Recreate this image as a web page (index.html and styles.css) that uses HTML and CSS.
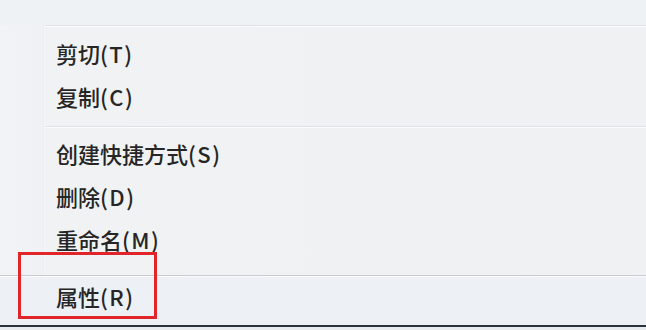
FILE: index.html
```html
<!DOCTYPE html>
<html lang="zh-CN">
<head>
<meta charset="utf-8">
<link rel="stylesheet" href="styles.css">
</head>
<body>
<div class="screen">
  <div class="menu">
    <div class="top"></div>
    <div class="sep"></div>
    <div class="group g1">
      <div class="item">剪切<span class="key">(T)</span></div>
      <div class="item">复制<span class="key">(C)</span></div>
    </div>
    <div class="sep"></div>
    <div class="group g2">
      <div class="item">创建快捷方式<span class="key">(S)</span></div>
      <div class="item">删除<span class="key">(D)</span></div>
      <div class="item">重命名<span class="key">(M)</span></div>
    </div>
    <div class="sep full"></div>
    <div class="group g3">
      <div class="item">属性<span class="key">(R)</span></div>
    </div>
    <div class="bottom"></div>
  </div>
  <div class="highlight"></div>
</div>
</body>
</html>
```
FILE: styles.css
```css
html, body {
  margin: 0;
  padding: 0;
  width: 646px;
  height: 330px;
  overflow: hidden;
  background: #eef0f3;
}
.screen {
  position: relative;
  width: 646px;
  height: 330px;
}
.menu {
  display: flex;
  flex-direction: column;
  height: 330px;
  background: linear-gradient(to right, #f1f3f5 0, #eff1f4 43px, #e1e3e6 43px, #f8f9fa 44px, #f0f2f4 45px, #eff1f3 100%);
  font-family: "Noto Sans CJK SC", "Noto Sans", sans-serif;
  font-size: 22px;
  font-weight: 500;
  color: #262626;
}
.top {
  height: 25px;
  background: #eef2f5;
}
.sep {
  height: 1px;
  margin-left: 45px;
  background: #dfe1e4;
  border-bottom: 1px solid #fbfcfd;
}
.sep.full {
  margin-left: 0;
  background: #c9ccd0;
}
.group {
  display: flex;
  flex-direction: column;
}
.g1 {
  padding: 5px 0 8px;
}
.g2 {
  padding: 4px 0 14px;
}
.g3 {
  background: #edf0f5;
  height: 48px;
  padding-bottom: 10px;
  box-sizing: border-box;
  justify-content: center;
}
.item {
  height: 43px;
  line-height: 43px;
  padding-left: 56px;
  white-space: nowrap;
}
.g3 .item {
  height: 38px;
  line-height: 38px;
}
.key {
  letter-spacing: 1.5px;
}
.bottom {
  border-top: 2px solid #27343c;
  flex: 1;
  background: #e9ecef;
}
.highlight {
  position: absolute;
  left: 18px;
  top: 252px;
  width: 133px;
  height: 61px;
  border: 3px solid #e0252b;
}
```
